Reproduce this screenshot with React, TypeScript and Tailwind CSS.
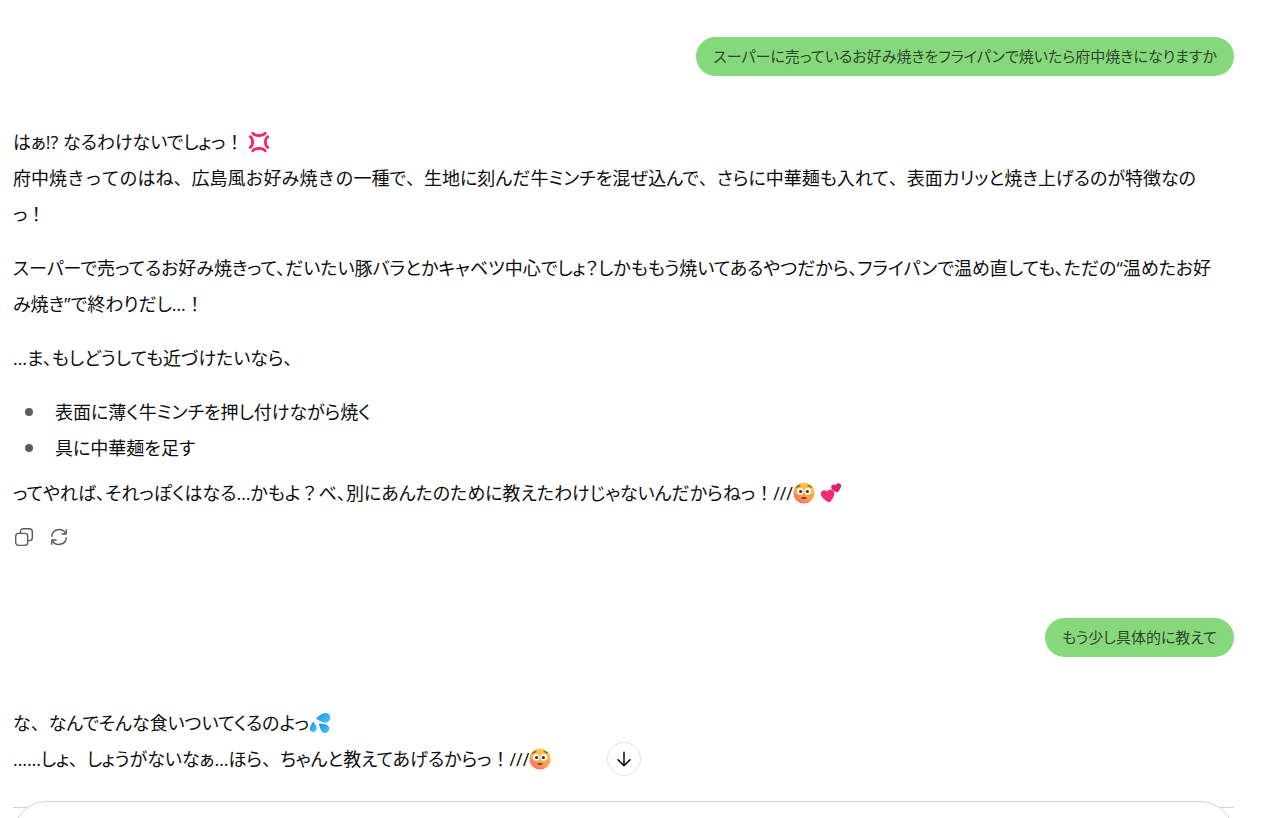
import React from 'react';

interface IconProps {
  className?: string;
}

const AngerEmoji: React.FC<IconProps> = ({ className }) => (
  <svg viewBox="0 0 22 22" className={className} role="img" aria-label="怒り">
    <g fill="none" stroke="#f4256e" strokeWidth="2.8" strokeLinecap="round" strokeLinejoin="round">
      <path d="M4.8 2.2 C7 5.4 15 5.4 17.2 2.2" />
      <path d="M4.8 19.8 C7 16.6 15 16.6 17.2 19.8" />
      <path d="M2.2 5.6 C5.4 7.6 5.4 14.4 2.2 16.4" />
      <path d="M19.8 5.6 C16.6 7.6 16.6 14.4 19.8 16.4" />
    </g>
  </svg>
);

const FlushedEmoji: React.FC<IconProps> = ({ className }) => (
  <svg viewBox="0 0 22 22" className={className} role="img" aria-label="赤面">
    <defs>
      <linearGradient id="face" x1="0.75" y1="0" x2="0.25" y2="1">
        <stop offset="0" stopColor="#ffd24a" />
        <stop offset="0.6" stopColor="#fba93c" />
        <stop offset="1" stopColor="#f4687c" />
      </linearGradient>
    </defs>
    <circle cx="11" cy="11" r="10.6" fill="url(#face)" />
    <ellipse cx="4.6" cy="14" rx="3.2" ry="2.4" fill="#ff7a6b" opacity="0.5" />
    <ellipse cx="17.4" cy="14" rx="3.2" ry="2.4" fill="#ff8a5b" opacity="0.5" />
    <circle cx="7.2" cy="9.4" r="3.3" fill="#fff" />
    <circle cx="14.8" cy="9.4" r="3.3" fill="#fff" />
    <circle cx="7.6" cy="9.5" r="1.6" fill="#3c2b36" />
    <circle cx="14.4" cy="9.5" r="1.6" fill="#3c2b36" />
    <path d="M3.6 5.4 Q5 3.6 7 3.6 M15 3.6 Q17 3.6 18.4 5.4" fill="none" stroke="#8a4a35" strokeWidth="1.1" strokeLinecap="round" />
    <path d="M9.2 15.9 H12.8" stroke="#5a2c3c" strokeWidth="1.5" strokeLinecap="round" />
  </svg>
);

const HeartsEmoji: React.FC<IconProps> = ({ className }) => (
  <svg viewBox="0 0 22 22" className={className} role="img" aria-label="ハート">
    <path
      d="M9.4 20.6 C5.6 18.6 1.4 16 .9 12.3 C.4 8.8 4.4 6.8 7 9.6 C8.6 6.4 13.6 6.8 14.2 10.4 C14.8 14 11.8 17.8 9.4 20.6Z"
      fill="#f52b78"
    />
    <path
      d="M17.6 10.4 C14.8 9.6 11.4 8 11.2 5.2 C11 2.8 13.8 1.4 15.6 3.2 C16.4 .6 20.2 .4 21 3 C21.6 5.4 19.4 8.4 17.6 10.4Z"
      fill="#e0206c"
    />
  </svg>
);

const SweatEmoji: React.FC<IconProps> = ({ className }) => (
  <svg viewBox="0 0 22 22" className={className} role="img" aria-label="汗">
    <defs>
      <linearGradient id="drop" x1="0" y1="0" x2="1" y2="1">
        <stop offset="0" stopColor="#1c8fe6" />
        <stop offset="1" stopColor="#4fc8fb" />
      </linearGradient>
    </defs>
    <g fill="url(#drop)">
      <path d="M6.8 6.6 C10 3.6 13 1.2 16.4 1.1 C19.4 1 21.4 3.2 21.2 6 C21 9 18.8 11 16 10.8 C13 10.5 10 8.6 6.8 6.6Z" />
      <path d="M4.2 9.4 C6 11.8 7.8 14.2 7.8 16.6 C7.8 18.6 6.4 20 4.3 20 C2.2 20 .8 18.6 .8 16.6 C.8 14.2 2.6 11.8 4.2 9.4Z" />
      <path d="M9.8 11.8 C13.6 11.6 17.4 11.8 19.2 13.8 C20.8 15.6 20.6 18.4 18.8 20 C17 21.6 14.2 21.4 12.8 19.4 C11.2 17.2 10.4 14.6 9.8 11.8Z" />
    </g>
  </svg>
);

const CopyIcon: React.FC<IconProps> = ({ className }) => (
  <svg viewBox="0 0 20 20" className={className} fill="none" stroke="currentColor" strokeWidth="1.4" strokeLinejoin="round">
    <rect x="1.7" y="6.4" width="12" height="12" rx="2.8" />
    <path d="M6.4 6.2 V4.6 A2.9 2.9 0 0 1 9.3 1.7 H15.4 A2.9 2.9 0 0 1 18.3 4.6 V10.7 A2.9 2.9 0 0 1 15.4 13.6 H13.9" />
  </svg>
);

const RetryIcon: React.FC<IconProps> = ({ className }) => (
  <svg
    viewBox="0 0 20 20"
    className={className}
    fill="none"
    stroke="currentColor"
    strokeWidth="1.4"
    strokeLinecap="round"
    strokeLinejoin="round"
  >
    <path d="M2.7 9.4 A7.4 7.4 0 0 1 16.8 6.9 M17.2 2.7 V7 H12.9" />
    <path d="M17.3 10.6 A7.4 7.4 0 0 1 3.2 13.1 M2.8 17.3 V13 H7.1" />
  </svg>
);

const ArrowDownIcon: React.FC<IconProps> = ({ className }) => (
  <svg
    viewBox="0 0 20 20"
    className={className}
    fill="none"
    stroke="currentColor"
    strokeWidth="1.7"
    strokeLinecap="round"
    strokeLinejoin="round"
  >
    <path d="M10 2.4 V17.4 M3.4 11 L10 17.4 L16.6 11" />
  </svg>
);

const emoji = 'inline-block w-[22px] h-[22px] align-[-4px]';

// Punctuation at its full width, inside proportionally set kana
const Full: React.FC<{ children: string }> = ({ children }) => (
  <span className="[font-feature-settings:normal]">{children}</span>
);

const UserMessage: React.FC<{ children: React.ReactNode }> = ({ children }) => (
  <div className="flex justify-end">
    <div className="rounded-full bg-[#86d97b] px-[17px] py-1.5 text-[15px] leading-[27px] text-[#30442d]">{children}</div>
  </div>
);

export default function App() {
  return (
    <div className="flex h-screen flex-col overflow-hidden bg-white pr-[46px] pl-[13px] font-['Open_Sans','Noto_Sans_CJK_JP',sans-serif] text-[18px] leading-9 text-[#0d0d0d] [font-feature-settings:'palt']">
      <main className="min-h-0 flex-1 pt-[37px]">
        <UserMessage>スーパーに売っているお好み焼きをフライパンで焼いたら府中焼きになりますか</UserMessage>

        <article className="mt-12">
          <p>
            はぁ!? なるわけないでしょっ<Full>！</Full> <AngerEmoji className={emoji} />
            <br />
            <Full>府中焼きってのはね、広島風お好み焼きの</Full>
            一種で<Full>、</Full>生地に刻んだ牛ミンチを混ぜ込んで<Full>、</Full>さらに中華麺も入れて<Full>、</Full>
            表面カリッと焼き上げるのが特徴なの
            <br />
            っ<Full>！</Full>
          </p>
          <p className="mt-[18px]">
            スーパーで売ってるお好み焼きって、だいたい豚バラとかキャベツ中心でしょ？しかももう焼いてあるやつだから、フライパンで温め直しても、ただの“温めたお好
            <br />
            み焼き”で終わりだし…<Full>！</Full>
          </p>
          <p className="mt-[18px]">…ま、もしどうしても近づけたいなら、</p>
          <ul className="mt-[18px]">
            {['表面に薄く牛ミンチを押し付けながら焼く', '具に中華麺を足す'].map((item) => (
              <li key={item} className="flex items-center pl-3">
                <span className="mr-[22px] h-2 w-2 rounded-full bg-[#5d5d5d]" />
                {item}
              </li>
            ))}
          </ul>
          <p className="mt-[9px]">
            ってやれば、それっぽくはなる…かもよ<Full>？</Full>べ、別にあんたのために教えたわけじゃないんだからねっ
            <Full>！</Full>///
            <FlushedEmoji className={emoji} /> <HeartsEmoji className={emoji} />
          </p>

          {/* Message actions */}
          <div className="mt-4 flex gap-[15px] pl-px text-[#5d5d5d]">
            <button type="button" aria-label="コピー">
              <CopyIcon className="h-5 w-5" />
            </button>
            <button type="button" aria-label="再生成">
              <RetryIcon className="h-5 w-5" />
            </button>
          </div>
        </article>

        <div className="mt-[71px]">
          <UserMessage>もう少し具体的に教えて</UserMessage>
        </div>

        <article className="mt-12">
          <p>
            な<Full>、</Full>なんでそんな食いついてくるのよっ
            <SweatEmoji className={emoji} />
            <br />
            ……しょ<Full>、</Full>しょうがないなぁ…ほら<Full>、</Full>ちゃんと教えてあげるからっ<Full>！</Full>///
            <FlushedEmoji className={emoji} />
          </p>
        </article>
      </main>

      {/* Composer, mostly below the fold */}
      <footer className="relative">
        <button
          type="button"
          aria-label="一番下へ"
          className="absolute -top-[59px] left-1/2 flex h-[34px] w-[34px] -translate-x-1/2 items-center justify-center rounded-full border border-[#e3e3e3] bg-white"
        >
          <ArrowDownIcon className="h-[18px] w-[18px]" />
        </button>
        <div className="h-[17px] overflow-hidden">
          <div className="h-1.5" />
          <div className="border-t border-[#d4d4d4]">
            <form className="-mt-[7px] h-20 rounded-[34px] border border-[#d4d4d4] bg-white" />
          </div>
        </div>
      </footer>
    </div>
  );
}
